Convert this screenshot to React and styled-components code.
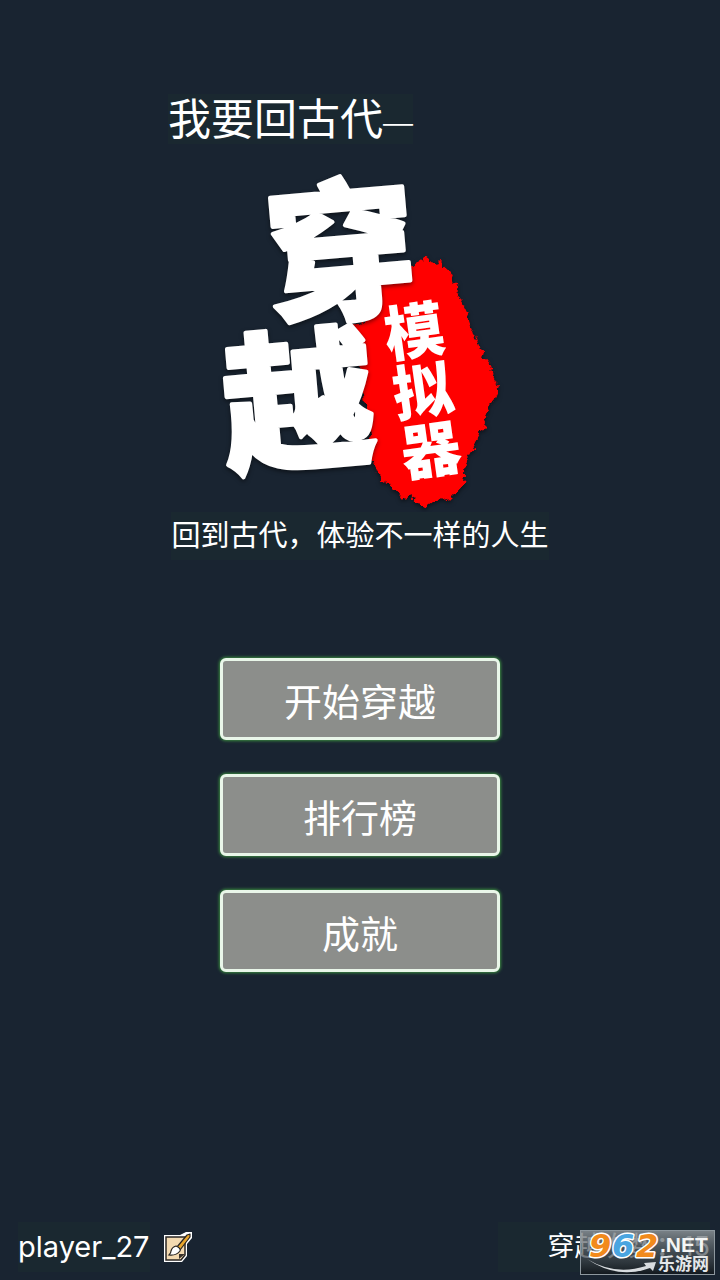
import styled, { createGlobalStyle } from "styled-components";

const GlobalStyle = createGlobalStyle`
  * {
    box-sizing: border-box;
  }
  body {
    margin: 0;
    background: #192431;
    color: #ffffff;
    font-family: Inter, "Noto Sans CJK SC", sans-serif;
  }
`;

const Page = styled.div`
  position: relative;
  display: flex;
  flex-direction: column;
  align-items: center;
  min-height: 100vh;
  padding: 94px 10px 8px 18px;
`;

const Main = styled.main`
  display: flex;
  flex-direction: column;
  align-items: center;
  flex: 1;
  min-width: 384px;
  margin-right: 8px;
`;

const Title = styled.h1`
  align-self: flex-start;
  margin: 0;
  background: #1a2830;
  font-size: 43px;
  font-weight: 400;
  line-height: 50px;
`;

const Dash = styled.span`
  font-size: 30px;
  font-weight: 300;
  line-height: 30px;
  vertical-align: middle;
`;

const Logo = styled.svg`
  width: 290px;
  height: 347px;
  margin-top: 21px;
  overflow: visible;
  font-family: "Noto Sans CJK SC", sans-serif;
  font-weight: 900;
  fill: #ffffff;
`;

const Shadowed = styled.g`
  filter: drop-shadow(0 2px 2px rgba(0, 0, 0, 0.5));
`;

const BrushText = styled.text`
  font-size: 152px;
  stroke: #ffffff;
  stroke-width: 4px;
  stroke-linejoin: round;
`;

const SealText = styled.text`
  font-size: 60px;
  writing-mode: vertical-rl;
`;

const Tagline = styled.p`
  margin: 0;
  background: #1a2830;
  font-size: 29px;
  line-height: 48px;
`;

const Menu = styled.nav`
  display: flex;
  flex-direction: column;
  gap: 34px;
  width: 280px;
  margin-top: 98px;
`;

const MenuButton = styled.button`
  height: 82px;
  border: 3px solid #e9f6e9;
  border-radius: 6px;
  background: #8c8e8b;
  box-shadow: 0 0 3px 1px #3b8a40;
  color: #ffffff;
  font-family: inherit;
  font-size: 38px;
  cursor: pointer;
`;

const Footer = styled.footer`
  display: flex;
  justify-content: space-between;
  align-self: stretch;
  line-height: 50px;
`;

const Player = styled.div`
  display: flex;
  align-items: center;
  gap: 14px;
`;

const Name = styled.span`
  background: #1a2830;
  font-size: 29px;
`;

const Count = styled.div`
  width: 212px;
  background: #1a2830;
  font-size: 27px;
  text-align: right;
`;

const EditButton = styled.button`
  display: flex;
  padding: 0;
  border: 0;
  background: none;
  cursor: pointer;
`;

const SiteBadge = styled.svg`
  position: absolute;
  right: 5px;
  bottom: 5px;
  width: 135px;
  height: 45px;
  overflow: visible;
  font-family: "Liberation Sans", "Noto Sans CJK SC", sans-serif;
  font-weight: 700;
`;

const Digits = styled.g`
  font-family: "DejaVu Sans", sans-serif;
  font-size: 32px;
  font-style: italic;
  stroke: #ffffff;
  stroke-width: 3px;
  stroke-linejoin: round;
  paint-order: stroke;
`;

const GameLogo = () => (
  <Logo viewBox="215 165 290 347" role="img" aria-label="穿越模拟器">
    <defs>
      <filter id="rough" x="-10%" y="-10%" width="120%" height="120%">
        <feTurbulence type="fractalNoise" baseFrequency="0.13" numOctaves="3" seed="4" />
        <feDisplacementMap in="SourceGraphic" scale="11" xChannelSelector="R" yChannelSelector="G" />
      </filter>
    </defs>
    <Shadowed>
      <path
        filter="url(#rough)"
        fill="#ff0000"
        d="M374 282L412 267L426 258L434 264L440 262L449 270L454 284L460 296L463 306L470 321L475 334L480 350L491 364L494 376L499 386L493 400L487 414L483 430L473 448L465 462L463 485L452 498L433 502L426 507L411 498L404 500L394 488L382 480L376 470L371 452L366 410L360 370L354 326L371 318Z"
      />
    </Shadowed>
    <SealText x="410" y="301" transform="rotate(-8 410 301)">模拟器</SealText>
    <Shadowed>
      <BrushText x="265" y="308" transform="rotate(-5 340 250)">穿</BrushText>
      <BrushText x="222" y="458" transform="rotate(-5 300 400)">越</BrushText>
    </Shadowed>
  </Logo>
);

const EditIcon = () => (
  <svg width="29" height="30" viewBox="0 0 29 30" aria-hidden="true">
    <path d="M0 3H16L22 0L28 0V6L23 12V24L18 30H0Z" fill="#fff" />
    <path d="M2 5H21V23L17 28H2Z" fill="#f3d9b0" stroke="#292522" strokeWidth="1.5" />
    <path d="M15 27V22H21Z" fill="#3a332d" />
    <path d="M13 15L23 3L26 2V5L16 18Z" fill="#e8a52c" stroke="#292522" strokeWidth="1.2" strokeLinejoin="round" />
    <path d="M12 14Q17 16 16 19Q12 24 5 23Q7 21 7 19Q8 15 12 14Z" fill="#fff" stroke="#292522" strokeWidth="1.2" />
  </svg>
);

const Badge = () => (
  <SiteBadge viewBox="0 0 135 45" role="img" aria-label="962.NET 乐游网">
    <defs>
      <linearGradient id="plate" x1="0" y1="0" x2="0" y2="1">
        <stop offset="0" stopColor="#8b9297" stopOpacity="0.85" />
        <stop offset="0.5" stopColor="#50585e" stopOpacity="0.7" />
        <stop offset="1" stopColor="#10161b" stopOpacity="0.9" />
      </linearGradient>
    </defs>
    <rect x="0.5" y="0.5" width="134" height="44" fill="url(#plate)" stroke="#8d979e" />
    <path d="M7 29Q35 46 66 36L64 33L76 32L73 41L70 38Q38 50 7 29Z" fill="#d8dcdf" />
    <Digits>
      <text x="9" y="27" fill="#f18a1c">9</text>
      <text x="32" y="27" fill="#4aa5e0">6</text>
      <text x="56" y="27" fill="#f18a1c">2</text>
    </Digits>
    <text x="80" y="22" fontSize="21" fill="#f4f5f5">.NET</text>
    <text x="78" y="40" fontSize="17" fill="#e4e7e9">乐游网</text>
  </SiteBadge>
);

const App = () => (
  <>
    <GlobalStyle />
    <Page>
      <Main>
        <Title>
          我要回古代<Dash>—</Dash>
        </Title>
        <GameLogo />
        <Tagline>回到古代，体验不一样的人生</Tagline>
        <Menu>
          <MenuButton type="button">开始穿越</MenuButton>
          <MenuButton type="button">排行榜</MenuButton>
          <MenuButton type="button">成就</MenuButton>
        </Menu>
      </Main>
      <Footer>
        <Player>
          <Name>player_27</Name>
          <EditButton type="button" aria-label="改名">
            <EditIcon />
          </EditButton>
        </Player>
        <Count>穿越次数：15</Count>
      </Footer>
      <Badge />
    </Page>
  </>
);

export default App;
